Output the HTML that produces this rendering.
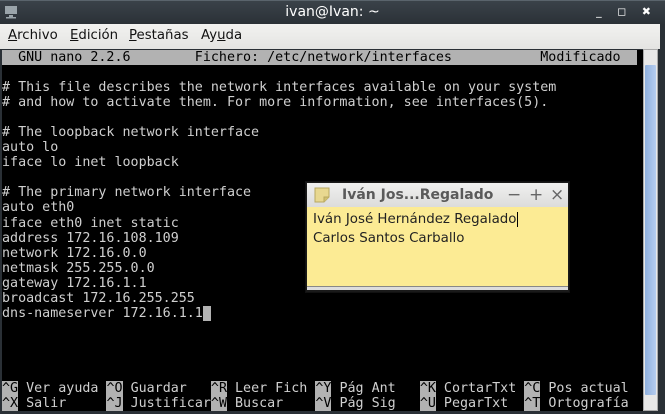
<!DOCTYPE html>
<html><head><meta charset="utf-8"><style>
*{margin:0;padding:0;box-sizing:border-box}
body{width:665px;height:414px;overflow:hidden;background:#2a3036;position:relative;font-family:"DejaVu Sans","Liberation Sans",sans-serif}
#title{position:absolute;left:0;top:0;width:665px;height:24px;background:linear-gradient(#3a4249,#2b3137);border-top:1px solid #5a646c;color:#fff;font-size:14px;text-align:center;line-height:22px}
#menu{position:absolute;left:0;top:24px;width:660px;height:25px;background:linear-gradient(#f2f2f0,#e4e4e2);font-size:13.3px;line-height:24px;color:#111}
#menu span{position:absolute;top:0}
#term{position:absolute;left:2px;top:50px;width:641px;height:361px;background:#000;font-family:"DejaVu Sans Mono","Liberation Mono",monospace;font-size:13.35px;line-height:15.05px;color:#d0d0d0;white-space:pre}
.inv{background:#b2b2b2;color:#000}
#sb{position:absolute;left:643px;top:49px;width:15px;height:362px;background:#e8e8e8;border:1px solid #aaa}
#thumb{position:absolute;left:1px;top:15px;width:11px;height:330px;background:linear-gradient(90deg,#8fb0de,#b6cdef);border-radius:1px}
#note{position:absolute;left:305px;top:181px;width:265px;height:112px;background:#1a1a1a;border:1px solid #111}
#nt{position:absolute;left:1px;top:1px;width:261px;height:24px;background:linear-gradient(#f0f0ef,#dcdcdb);font-family:"DejaVu Sans",sans-serif;font-weight:bold;font-size:14px;color:#5a5a5a;line-height:24px}
#nt b{position:absolute;top:0;font-weight:normal;font-size:17px;color:#666}
#nb{position:absolute;left:1px;top:25px;width:261px;height:83px;background:#fceb94;font-size:13.4px;line-height:19px;color:#222;padding:3px 6px;font-family:"DejaVu Sans",sans-serif}
#nb:after{content:"";position:absolute;left:0;right:0;bottom:0;height:3px;border-top:1px solid #888;background:#ddd}
</style></head><body>
<div id="title"><svg style="position:absolute;left:5px;top:4px" width="12" height="14"><rect x="0" y="1" width="12" height="8" fill="#9aa4aa"/><rect x="4" y="10" width="4" height="2" fill="#9aa4aa"/><rect x="1" y="12" width="10" height="1.5" fill="#9aa4aa"/></svg>ivan@Ivan: ~<span style="position:absolute;right:8px;top:0;font-size:11px;color:#fff;letter-spacing:6px">_ ◻ ✖</span></div>
<div id="menu"><span style="left:8px"><u>A</u>rchivo</span><span style="left:70px"><u>E</u>dición</span><span style="left:129px"><u>P</u>estañas</span><span style="left:201px">Ay<u>u</u>da</span></div>
<div id="term"><span class="inv">  GNU nano 2.2.6        Fichero: /etc/network/interfaces           Modificado  </span>

# This file describes the network interfaces available on your system
# and how to activate them. For more information, see interfaces(5).

# The loopback network interface
auto lo
iface lo inet loopback

# The primary network interface
auto eth0
iface eth0 inet static
address 172.16.108.109
network 172.16.0.0
netmask 255.255.0.0
gateway 172.16.1.1
broadcast 172.16.255.255
dns-nameserver 172.16.1.1<span class="inv"> </span>




<span class="inv">^G</span> Ver ayuda <span class="inv">^O</span> Guardar   <span class="inv">^R</span> Leer Fich <span class="inv">^Y</span> Pág Ant   <span class="inv">^K</span> CortarTxt <span class="inv">^C</span> Pos actual
<span class="inv">^X</span> Salir     <span class="inv">^J</span> Justificar<span class="inv">^W</span> Buscar    <span class="inv">^V</span> Pág Sig   <span class="inv">^U</span> PegarTxt  <span class="inv">^T</span> Ortografía</div>
<div id="sb"><div id="thumb"></div></div>
<div id="note"><div id="nt"><svg style="position:absolute;left:7px;top:4px" width="16" height="16"><path d="M1 1h14v9l-5 5H1z" fill="#e8d890" stroke="#b8a860"/><path d="M10 15v-5h5" fill="#d0c070" stroke="#b8a860"/></svg><span style="position:absolute;left:35px">Iván Jos...Regalado</span><b style="left:200px">−</b><b style="left:222px">+</b><b style="left:243px">×</b></div>
<div id="nb">Iván José Hernández Regalado<span style="border-left:1px solid #000;margin-left:1px"></span><br>Carlos Santos Carballo</div></div>
</body></html>
